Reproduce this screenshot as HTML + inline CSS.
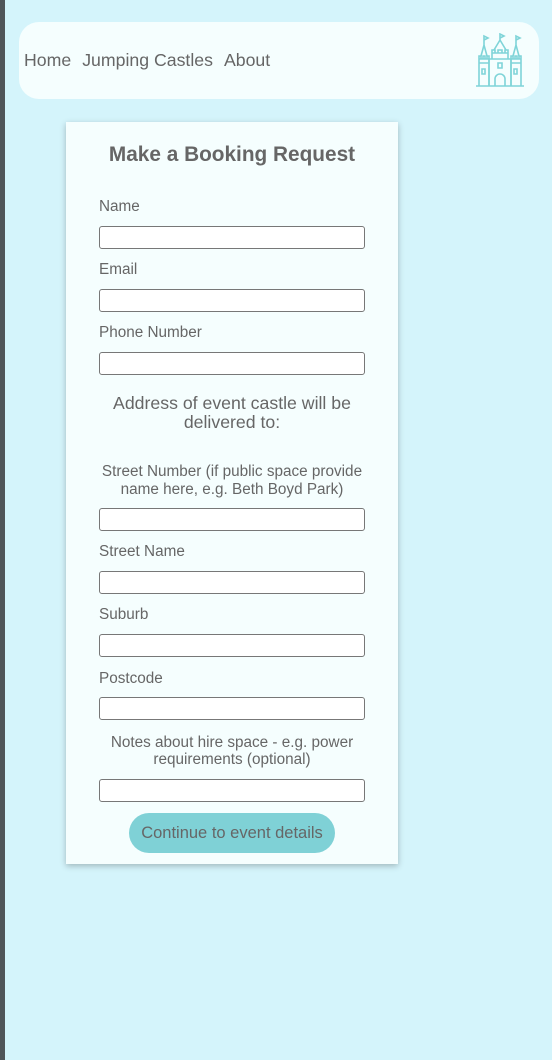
<!DOCTYPE html>
<html><head><style>
*{margin:0;padding:0;box-sizing:border-box}
body{width:552px;height:1060px;background:#d4f4fb;font-family:"Liberation Sans",sans-serif;color:#666;position:relative;overflow:hidden}
.bar{position:absolute;left:0;top:0;width:5px;height:1060px;background:#4f5559}
.hdr{position:absolute;left:19px;top:22px;width:520px;height:77px;background:#f5fefe;border-radius:20px}
.nav{position:absolute;left:24px;top:50px;font-size:17.7px;color:#666;word-spacing:0}
.nav span{margin-right:11px}
.card{position:absolute;left:66px;top:122px;width:332px;height:742px;background:#f5fefe;box-shadow:0 2px 6px rgba(0,0,0,.25)}
.t{position:absolute;font-size:15.3px;color:#666}
.c{left:66px;width:332px;text-align:center}
.in{position:absolute;left:99px;width:266px;height:23px;background:#fff;border:1px solid #777;border-radius:3px}
h1{position:absolute;left:66px;width:332px;top:143px;text-align:center;font-size:20.8px;font-weight:bold;color:#666}
.btn{position:absolute;left:129px;top:813px;width:206px;height:40px;background:#7fd1d6;border-radius:20px;text-align:center;line-height:40px;font-size:16.5px;color:#666}
</style></head><body>
<div class="bar"></div>
<div class="hdr"></div>
<div class="nav"><span>Home</span><span>Jumping Castles</span><span>About</span></div>
<svg style="position:absolute;left:474px;top:33px" width="52" height="54" viewBox="0 0 52 54" fill="none" stroke="#7fd4d8" stroke-width="1.6">
<path d="M2 53H50"/>
<path d="M5 53V30H15V53M5 30V26H15V30M5 26v-3h2v3M9 26v-3h2v3M13 26v-3h2v3"/>
<path d="M37 53V30H47V53M37 30V26H47V30M37 26v-3h2v3M41 26v-3h2v3M45 26v-3h2v3"/>
<path d="M15 53V26H37V53M18 26V20H34V26M18 20v-3h3v3M24 20v-3h4v3M31 20v-3h3v3"/>
<path d="M21 53V46a5 5 0 0 1 10 0V53"/>
<path d="M7 23L10 12L13 23M10 12V3l4 2-4 2"/>
<path d="M39 23L42 12L45 23M42 12V3l4 2-4 2"/>
<path d="M20 17L26 7L32 17M26 7V1l4 2-4 2"/>
<path d="M8 36h3v5H8zM40 36h3v5h-3zM24 30h4v5h-4z"/>
</svg>
<div class="card"></div>
<h1>Make a Booking Request</h1>
<div class="t" style="left:99px;top:198px">Name</div><div class="in" style="top:226px"></div>
<div class="t" style="left:99px;top:261px">Email</div><div class="in" style="top:289px"></div>
<div class="t" style="left:99px;top:324px">Phone Number</div><div class="in" style="top:352px"></div>
<div class="t c" style="top:394px;font-size:17.7px;line-height:19px">Address of event castle will be<br>delivered to:</div>
<div class="t c" style="top:463px;line-height:18px">Street Number (if public space provide<br>name here, e.g. Beth Boyd Park)</div><div class="in" style="top:508px"></div>
<div class="t" style="left:99px;top:543px">Street Name</div><div class="in" style="top:571px"></div>
<div class="t" style="left:99px;top:606px">Suburb</div><div class="in" style="top:634px"></div>
<div class="t" style="left:99px;top:670px">Postcode</div><div class="in" style="top:697px"></div>
<div class="t c" style="top:734px;line-height:17px">Notes about hire space - e.g. power<br>requirements (optional)</div><div class="in" style="top:779px"></div>
<div class="btn">Continue to event details</div>
</body></html>
